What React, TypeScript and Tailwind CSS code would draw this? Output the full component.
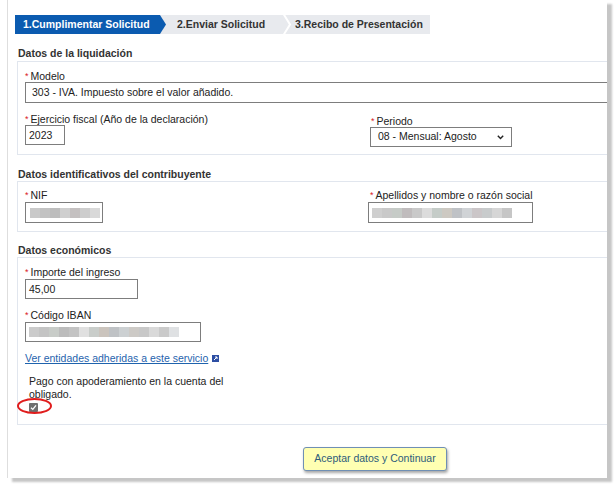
import React from "react";

const font = { fontFamily: '"Liberation Sans", Arial, sans-serif' };

const Label = ({ text, className = "" }: { text: string; className?: string }) => (
    <div className={`h-[12px] leading-[12px] text-[#222] whitespace-nowrap ${className}`}>
        <span className="text-[#d9201c] text-[9px] mr-[2px] align-top">*</span>
        {text}
    </div>
);

const Blur = ({ shades }: { shades: string[] }) => (
    <div className="flex h-[10px] blur-[0.6px]">
        {shades.map((c, i) => (
            <div key={i} className="w-[10px] h-full" style={{ backgroundColor: c }} />
        ))}
    </div>
);

const Section = ({ title, children, className = "" }: { title: string; children: React.ReactNode; className?: string }) => (
    <>
        <div className="ml-[10px] h-[13px] leading-[13px] font-bold text-[#333]">{title}</div>
        <div className={`ml-[9px] w-[640px] border border-[#e1e6ee] ${className}`}>{children}</div>
    </>
);

export default function App() {
    return (
        <div className="w-[615px] h-[486px] bg-white overflow-hidden text-[10.5px]" style={font}>
            <div className="ml-[7px] w-[600px] h-[478px] bg-white border-l border-[#dedede] shadow-[5px_4px_2px_#c6c6c6] overflow-hidden">
                {/* pasos */}
                <div className="mt-[15px] ml-[7px] flex h-[19px] w-[415px] bg-[#e8eaee] font-bold leading-[19px]">
                    <div className="w-[151px] bg-[#0b5bb0] text-white pl-[8px] [clip-path:polygon(0_0,145px_0,151px_50%,145px_100%,0_100%)]">
                        1.Cumplimentar Solicitud
                    </div>
                    <div className="w-[117px] pl-[11px] text-[#333]">2.Enviar Solicitud</div>
                    <svg width="9" height="19" viewBox="0 0 9 19" className="shrink-0">
                        <polyline points="0.5,-1 7,9.5 0.5,20" fill="none" stroke="white" strokeWidth="2" />
                    </svg>
                    <div className="pl-[3px] text-[#333]">3.Recibo de Presentación</div>
                </div>

                <div className="mt-[13px]" />
                <Section title="Datos de la liquidación" className="mt-[1px] pt-[8px] pb-[7px]">
                    <div className="pl-[7px]">
                        <Label text="Modelo" />
                        <div className="h-[21px] w-[620px] border border-[#7d7d7d] pl-[6px] leading-[19px] text-[#222]">
                            303 - IVA. Impuesto sobre el valor añadido.
                        </div>
                    </div>
                    <div className="flex mt-[10px]">
                        <div className="pl-[7px] w-[350px]">
                            <Label text="Ejercicio fiscal (Año de la declaración)" />
                            <div className="h-[20px] w-[40px] border border-[#7d7d7d] pl-[3px] leading-[18px] text-[#222]">2023</div>
                        </div>
                        <div className="pt-[2px] pl-[2px]">
                            <Label text="Periodo" className="ml-[1px]" />
                            <div className="h-[20px] w-[142px] border border-[#7d7d7d] flex items-center justify-between pl-[7px] pr-[7px] text-[#222]">
                                <span>08 - Mensual: Agosto</span>
                                <svg width="7" height="5" viewBox="0 0 7 5">
                                    <polyline points="0.8,0.8 3.5,3.6 6.2,0.8" fill="none" stroke="#222" strokeWidth="1.4" />
                                </svg>
                            </div>
                        </div>
                    </div>
                </Section>

                <div className="mt-[13px]" />
                <Section title="Datos identificativos del contribuyente" className="pt-[7px] pb-[8px]">
                    <div className="flex">
                        <div className="pl-[7px] w-[350px]">
                            <Label text="NIF" />
                            <div className="mt-[1px] h-[21px] w-[78px] border border-[#7d7d7d] flex items-center pl-[4px]">
                                <Blur shades={["#c9c9c9", "#c2c2c2", "#bdbdbd", "#cfcfcf", "#c4c0c0", "#cdcdcd", "#d9d9d9"]} />
                            </div>
                        </div>
                        <div>
                            <Label text="Apellidos y nombre o razón social" className="ml-[2px]" />
                            <div className="mt-[1px] h-[21px] w-[165px] border border-[#7d7d7d] flex items-center pl-[3px]">
                                <Blur shades={["#cfcfcf", "#c9c9c9", "#c6cbc7", "#c0bcbd", "#c9c9c9", "#dcdcdc", "#c5ccc8", "#cdc9c2", "#bfc2c6", "#d0d3d6", "#cbc6c8", "#c8cbcc", "#d6d6d6", "#c6c6c6"]} />
                            </div>
                        </div>
                    </div>
                </Section>

                <div className="mt-[12px]" />
                <Section title="Datos económicos" className="pt-[8px] pb-[12px] relative">
                    <div className="pl-[7px]">
                        <Label text="Importe del ingreso" />
                        <div className="mt-[1px] h-[20px] w-[113px] border border-[#7d7d7d] pl-[3px] leading-[18px] text-[#222]">45,00</div>

                        <Label text="Código IBAN" className="mt-[10px]" />
                        <div className="mt-[1px] h-[20px] w-[176px] border border-[#7d7d7d] flex items-center pl-[3px]">
                            <Blur shades={["#cbcbcb", "#c4c4c4", "#c8ccc8", "#bcbcbc", "#c3c3c3", "#e0e0e0", "#c9cdca", "#cbc4bd", "#bfc2c5", "#ccd0d2", "#cdcac6", "#c8c8c8", "#d9d9d9", "#cacaca", "#dfe1e3"]} />
                        </div>

                        <div className="mt-[10px] h-[13px] leading-[13px] flex items-center">
                            <span className="text-[#1f63ad] underline">Ver entidades adheridas a este servicio</span>
                            <svg width="7" height="7" viewBox="0 0 7 7" className="ml-[4px]">
                                <rect x="0" y="0" width="7" height="7" fill="#2d4ea3" />
                                <polyline points="2,5 5,2" stroke="white" strokeWidth="1" />
                                <polyline points="3,2 5,2 5,4" fill="none" stroke="white" strokeWidth="1" />
                            </svg>
                        </div>

                        <div className="mt-[10px] ml-[4px] w-[200px] leading-[13px] text-[#222]">
                            Pago con apoderamiento en la cuenta del obligado.
                        </div>
                        <div className="relative ml-[4px] mt-[2px] w-[9px] h-[9px]">
                            <div className="w-[9px] h-[9px] rounded-[1px] bg-[#6f6f6f] flex items-center justify-center">
                                <svg width="7" height="7" viewBox="0 0 7 7">
                                    <polyline points="1,3.8 2.8,5.4 6,1.4" fill="none" stroke="white" strokeWidth="1.3" />
                                </svg>
                            </div>
                            <div className="absolute left-[-12px] top-[-5px] w-[35px] h-[16px] rounded-[50%] border-2 border-[#e01d1d]" />
                        </div>
                    </div>
                </Section>

                <div className="mt-[22px] ml-[295px] w-[144px] h-[24px] bg-[#ffffb2] border border-[#6f8fb4] rounded-[3px] shadow-[1px_2px_3px_rgba(0,0,0,0.35)] flex items-center justify-center text-[#2d5c7b]">
                    Aceptar datos y Continuar
                </div>
            </div>
        </div>
    );
}
